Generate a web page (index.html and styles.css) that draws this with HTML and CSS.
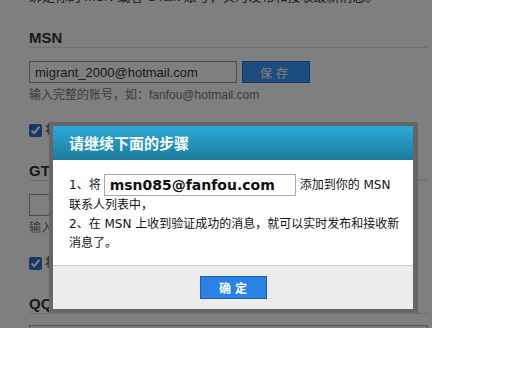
FILE: index.html
```html
<!DOCTYPE html>
<html lang="zh-CN">
<head>
    <meta charset="UTF-8">
    <title>绑定 MSN / GTalk</title>
    <link rel="stylesheet" href="styles.css">
</head>
<body>

    <div class="page">
        <!-- 设置页面 -->
        <div class="settings">
            <p class="intro">绑定你的 MSN 或者 GTalk 账号，实时发布和接收最新消息。</p>

            <section class="im">
                <h3>MSN</h3>
                <div class="bind-row">
                    <input class="account" type="text" value="migrant_2000@hotmail.com">
                    <button class="btn-save">保存</button>
                </div>
                <p class="hint">输入完整的账号，如：fanfou@hotmail.com</p>
                <label class="sync"><input type="checkbox" checked>将 MSN 签名同步为饭否消息</label>
            </section>

            <section class="im">
                <h3>GTalk</h3>
                <div class="bind-row">
                    <input class="account" type="text" value="">
                    <button class="btn-save">保存</button>
                </div>
                <p class="hint">输入完整的账号，如：fanfou@gmail.com</p>
                <label class="sync"><input type="checkbox" checked>将 GTalk 签名同步为饭否消息</label>
            </section>

            <section class="im">
                <h3>QQ</h3>
                <div class="notice">QQ 绑定功能即将开放，敬请期待。</div>
            </section>
        </div>

        <!-- 遮罩 -->
        <div class="mask"></div>

        <!-- 对话框 -->
        <div class="dialog">
            <div class="dialog-head">请继续下面的步骤</div>
            <div class="dialog-body">
                <p class="step">1、将<input class="bot" type="text" value="msn085@fanfou.com" readonly>添加到你的 MSN<br>联系人列表中，<br>2、在 MSN 上收到验证成功的消息，就可以实时发布和接收新<br>消息了。</p>
            </div>
            <div class="dialog-foot">
                <button class="btn-ok">确定</button>
            </div>
        </div>
    </div>

</body>
</html>
```

FILE: styles.css
```css
body {
    margin: 0;
    background: #fff;
    font-family: "Liberation Sans", "Noto Sans CJK SC", sans-serif;
    color: #333;
}

.page {
    position: relative;
    width: 432px;
    height: 328px;
    overflow: hidden;
    background: #fff;
}

/* 设置页面 */
.settings {
    padding: 0 4px 0 29px;
}

.intro {
    margin: -11px 0 0;
    font-size: 13px;
    line-height: 16px;
}

.im h3 {
    margin: 23px 0 0;
    font-size: 15px;
    line-height: 18px;
    border-bottom: 1px solid #e0e0e0;
}

.im:first-of-type h3 {
    margin-top: 24px;
}

.bind-row {
    display: flex;
    gap: 5px;
    margin-top: 13px;
}

.account {
    box-sizing: border-box;
    width: 208px;
    height: 22px;
    margin: 0;
    padding: 0 5px;
    border: 1px solid #999;
    font-family: "Liberation Sans", sans-serif;
    font-size: 13px;
    color: #333;
}

.btn-save {
    width: 68px;
    height: 22px;
    background: #3a9aff;
    border: 1px solid #2a6fc0;
    color: #fff;
    font-family: "Noto Sans CJK SC", sans-serif;
    font-size: 12px;
    letter-spacing: 4px;
}

.hint {
    margin: 4px 0 0;
    font-size: 12px;
    line-height: 16px;
    color: #777;
}

.sync {
    display: flex;
    align-items: center;
    gap: 3px;
    margin-top: 18px;
    font-size: 12px;
    line-height: 18px;
}

.sync input {
    margin: 0;
    width: 13px;
    height: 13px;
    accent-color: #2f6fd0;
}

.notice {
    margin-top: 11px;
    padding: 6px 8px;
    border: 1px solid #aaa;
    background: #f4f4f4;
    font-size: 12px;
    line-height: 16px;
}

/* 遮罩 */
.mask {
    position: absolute;
    top: 0;
    left: 0;
    right: 0;
    bottom: 0;
    background: rgba(0, 0, 0, 0.5);
}

/* 对话框 */
.dialog {
    position: absolute;
    top: 122px;
    left: 49px;
    width: 360px;
    border: 4px solid #666;
    border-right-width: 5px;
    background: #fff;
}

.dialog-head {
    height: 34px;
    padding-left: 16px;
    background: linear-gradient(#2aaad8, #1e7c9c);
    color: #fff;
    font-family: "Noto Sans CJK SC", sans-serif;
    font-size: 15px;
    font-weight: bold;
    line-height: 34px;
}

.dialog-body {
    height: 91px;
    padding: 14px 12px 0 16px;
}

.step {
    margin: 0;
    font-family: "DejaVu Sans", "Noto Sans CJK SC", sans-serif;
    font-size: 12px;
    line-height: 19px;
    color: #111;
    white-space: nowrap;
}

.bot {
    box-sizing: border-box;
    width: 192px;
    height: 22px;
    margin: 0 4px 0 3px;
    padding: 0 5px;
    border: 1px solid #aaa;
    vertical-align: middle;
    font-family: "DejaVu Sans", sans-serif;
    font-size: 14px;
    font-weight: bold;
    color: #111;
}

.dialog-foot {
    padding: 10px 0;
    border-top: 1px solid #ccc;
    background: #ececec;
    text-align: center;
}

.btn-ok {
    width: 67px;
    height: 23px;
    background: #2b82e6;
    border: 1px solid #1d5eab;
    color: #fff;
    font-family: "Noto Sans CJK SC", sans-serif;
    font-size: 12px;
    font-weight: bold;
    letter-spacing: 4px;
    padding: 0 0 0 4px;
}
```
